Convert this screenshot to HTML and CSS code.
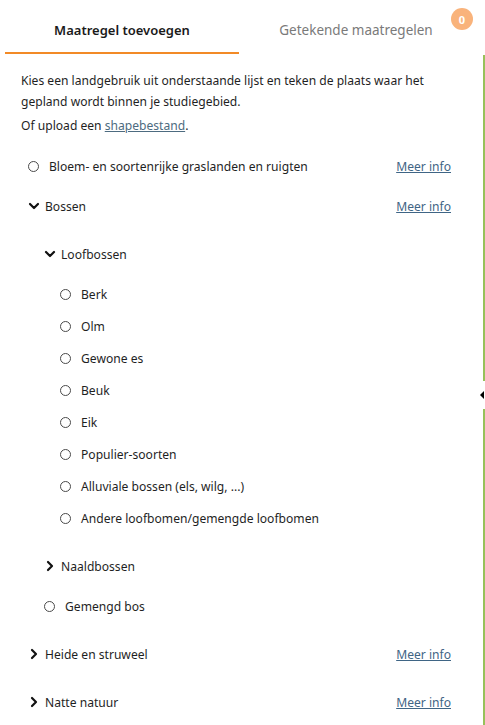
FILE: index.html
```html
<!DOCTYPE html>
<html lang="nl">
<head>
<meta charset="utf-8">
<title>Maatregel toevoegen</title>
<link rel="stylesheet" href="styles.css">
</head>
<body>
<div class="panel">
  <div class="tabs">
    <div class="tab active">Maatregel toevoegen</div>
    <div class="tab">Getekende maatregelen</div>
    <span class="badge">0</span>
  </div>
  <div class="content">
    <p class="intro">Kies een landgebruik uit onderstaande lijst en teken de plaats waar het gepland wordt binnen je studiegebied.</p>
    <p class="upload">Of upload een <a href="#">shapebestand</a>.</p>

    <ul class="tree">
      <li class="row leaf lvl1 first">
        <span class="radio"></span><span class="label">Bloem- en soortenrijke graslanden en ruigten</span><a class="info" href="#">Meer info</a>
      </li>
      <li class="g8">
        <div class="row lvl1">
          <svg class="chev" viewBox="0 0 12 12"><path d="M2 4 L6 8 L10 4" /></svg><span class="label">Bossen</span><a class="info" href="#">Meer info</a>
        </div>
        <ul class="sub">
          <li class="g16">
            <div class="row lvl2">
              <svg class="chev" viewBox="0 0 12 12"><path d="M2 4 L6 8 L10 4" /></svg><span class="label">Loofbossen</span>
            </div>
            <ul class="sub leaves">
              <li class="row leaf lvl3 g8"><span class="radio"></span><span class="label">Berk</span></li>
              <li class="row leaf lvl3"><span class="radio"></span><span class="label">Olm</span></li>
              <li class="row leaf lvl3"><span class="radio"></span><span class="label">Gewone es</span></li>
              <li class="row leaf lvl3"><span class="radio"></span><span class="label">Beuk</span></li>
              <li class="row leaf lvl3"><span class="radio"></span><span class="label">Eik</span></li>
              <li class="row leaf lvl3"><span class="radio"></span><span class="label">Populier-soorten</span></li>
              <li class="row leaf lvl3"><span class="radio"></span><span class="label">Alluviale bossen (els, wilg, ...)</span></li>
              <li class="row leaf lvl3"><span class="radio"></span><span class="label">Andere loofbomen/gemengde loofbomen</span></li>
            </ul>
          </li>
          <li class="row lvl2 g16">
            <svg class="chev" viewBox="0 0 12 12"><path d="M4 2 L8 6 L4 10" /></svg><span class="label">Naaldbossen</span>
          </li>
          <li class="row leaf lvl2 g8">
            <span class="radio"></span><span class="label">Gemengd bos</span>
          </li>
        </ul>
      </li>
      <li class="row lvl1 g16">
        <svg class="chev" viewBox="0 0 12 12"><path d="M4 2 L8 6 L4 10" /></svg><span class="label">Heide en struweel</span><a class="info" href="#">Meer info</a>
      </li>
      <li class="row lvl1 g16">
        <svg class="chev" viewBox="0 0 12 12"><path d="M4 2 L8 6 L4 10" /></svg><span class="label">Natte natuur</span><a class="info" href="#">Meer info</a>
      </li>
    </ul>
  </div>
  <div class="splitter">
    <span class="seg top"></span>
    <span class="handle"></span>
    <span class="seg bottom"></span>
  </div>
</div>
</body>
</html>
```

FILE: styles.css
```css
* { box-sizing: border-box; }
html, body {
  margin: 0;
  padding: 0;
  background: #ffffff;
}
body {
  font-family: "Noto Sans", "Open Sans", sans-serif;
  font-size: 12.1px;
  color: #1f1f1f;
  width: 485px;
  height: 725px;
  overflow: hidden;
}
.panel {
  position: relative;
  width: 485px;
  height: 725px;
}
.tabs {
  display: flex;
  padding: 0 12px 0 5px;
  height: 54px;
  position: relative;
}
.tab {
  flex: 0 0 234px;
  display: flex;
  align-items: center;
  justify-content: center;
  padding-top: 8px;
  font-size: 13.5px;
  color: #7a7a7a;
  border-bottom: 2px solid transparent;
}
.tab.active {
  color: #1a1a1a;
  font-size: 13px;
  font-weight: 600;
  border-bottom-color: #f28a26;
}
.badge {
  position: absolute;
  left: 451px;
  top: 8px;
  width: 22px;
  height: 22px;
  border-radius: 50%;
  background: #f9b37b;
  color: #fff;
  font-size: 11px;
  font-weight: 700;
  display: flex;
  align-items: center;
  justify-content: center;
}
.content {
  padding: 16px 34px 0 21px;
}
.intro {
  margin: 0;
  line-height: 21px;
}
.upload {
  margin: 3px 0 0;
  line-height: 21px;
}
.upload a {
  color: #4d6b80;
  text-decoration: underline;
}
.tree, .sub {
  list-style: none;
  margin: 0;
  padding: 0;
}
.tree {
  margin-top: 14px;
}
.row {
  display: flex;
  align-items: center;
  height: 32px;
}
.lvl1 { padding-left: 7px; }
.lvl2 { padding-left: 23px; }
.lvl3 { padding-left: 39px; }
.g8 { margin-top: 8px; }
.g16 { margin-top: 16px; }
.radio {
  flex: 0 0 11px;
  width: 11px;
  height: 11px;
  border: 1.4px solid #4a4a4a;
  border-radius: 50%;
  margin-right: 10px;
}
.chev {
  flex: 0 0 12px;
  width: 12px;
  height: 12px;
  margin-right: 5px;
}
.chev path {
  fill: none;
  stroke: #111;
  stroke-width: 2.2;
  stroke-linecap: round;
  stroke-linejoin: round;
}
.label {
  flex: 1 1 auto;
}
.info {
  color: #3f6585;
  text-decoration: underline;
  flex: 0 0 auto;
}
.splitter {
  position: absolute;
  right: 0;
  top: 55px;
  bottom: 0;
  width: 14px;
  display: flex;
  flex-direction: column;
  align-items: flex-end;
}
.seg {
  width: 2px;
  background: #97c15a;
}
.seg.top { height: 326px; }
.seg.bottom { flex: 1; }
.handle {
  height: 28px;
  width: 14px;
  position: relative;
}
.handle::before {
  content: "";
  position: absolute;
  right: 1px;
  top: 10px;
  border-top: 4px solid transparent;
  border-bottom: 4px solid transparent;
  border-right: 4px solid #000;
}
```
